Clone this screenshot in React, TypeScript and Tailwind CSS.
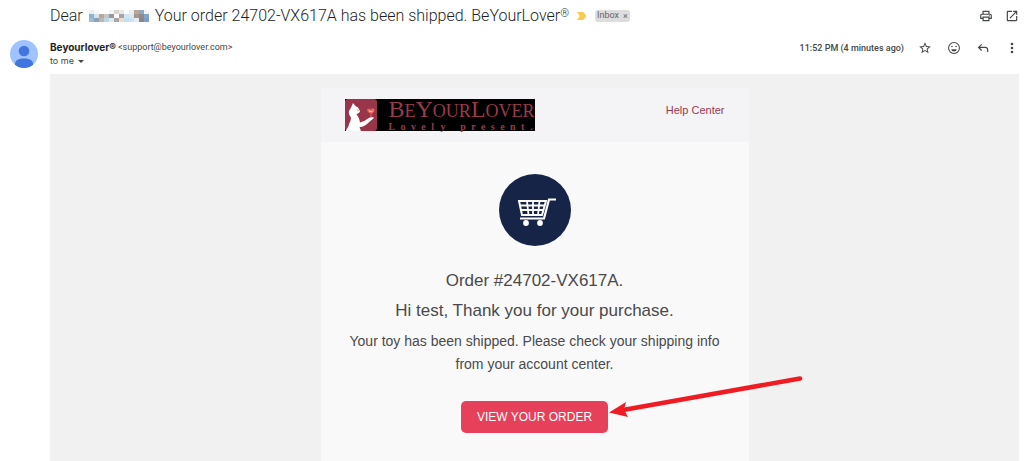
import type { ReactNode } from "react";

const MOSAIC = [
  "#eeeeee", "#f7f7f7", "#ffffff", "#ffffff", "#f5f5f5", "#d9d4d2", "#e8e8e8", "#ffffff", "#e6eef2", "#b9a59c", "#8fa9c0", "#f4f4f4",
  "#8fb0cf", "#d9e2e8", "#b9a79f", "#c6c9cc", "#9b979c", "#fafafa", "#a9a3a6", "#cfe6f2", "#dfe6ea", "#a39890", "#8d8a90", "#7fa6c9",
  "#9bbcd6", "#8da3b5", "#c5b4ab", "#b8d8e8", "#dfe9ee", "#aaa5a8", "#f1d9c8", "#bfe0f0", "#cfe3ee", "#e9edf0", "#8b878c", "#7f9fc0",
];

function IconButton({ label, children }: { label: string; children: ReactNode }) {
  return (
    <button type="button" aria-label={label} className="flex size-4 items-center justify-center text-[#444746]">
      {children}
    </button>
  );
}

function Avatar() {
  return (
    <svg viewBox="0 0 28 28" className="size-7">
      <clipPath id="avatar"><circle cx="14" cy="14" r="14" /></clipPath>
      <g clipPath="url(#avatar)">
        <rect width="28" height="28" fill="#a0c3ff" />
        <circle cx="14" cy="11" r="5.300" fill="#4175df" />
        <path d="M5 24c0-4 4-5.500 9-5.500s9 1.500 9 5.500v1.500a14 14 0 0 1-18 0z" fill="#4175df" />
      </g>
    </svg>
  );
}

function Subject() {
  return (
    <div className="flex items-center">
      <h1 className="flex items-center font-[Roboto,sans-serif] text-base leading-6 font-light text-[#1f1f1f]">
        Dear
        <span className="mx-1.5 grid h-3 w-15 grid-cols-12">
          {MOSAIC.map((c, i) => <span key={i} style={{ backgroundColor: c }} />)}
        </span>
        Your order 24702-VX617A has been shipped. BeYourLover
        <span className="self-start text-[11px] leading-5">®</span>
      </h1>
      <svg viewBox="0 0 10 8" className="ml-2 h-2 w-2.5">
        <path d="M0 0h6.200L9.500 4 6.200 8H0l2.600-4z" fill="#f7cb4d" />
      </svg>
      <span className="ml-2 flex h-3 items-center gap-1 rounded-[3px] bg-[#dddddd] px-0.5 font-[Roboto,sans-serif] text-[9px] text-[#666666]">
        Inbox
        <button type="button" aria-label="Remove label Inbox" className="leading-3">×</button>
      </span>
      <div className="ml-auto flex gap-2.5">
        <IconButton label="Print all">
          <svg viewBox="0 0 24 24" className="size-3.5" fill="currentColor">
            <path d="M19 8h-1V3H6v5H5c-1.660 0-3 1.340-3 3v6h4v4h12v-4h4v-6c0-1.660-1.340-3-3-3zM8 5h8v3H8V5zm8 14H8v-4h8v4zm2-4v-2H6v2H4v-4c0-.55.45-1 1-1h14c.55 0 1 .45 1 1v4h-2z" />
            <circle cx="18" cy="11.500" r="1" />
          </svg>
        </IconButton>
        <IconButton label="In new window">
          <svg viewBox="0 0 24 24" className="size-3.5" fill="currentColor">
            <path d="M19 19H5V5h7V3H5a2 2 0 0 0-2 2v14a2 2 0 0 0 2 2h14c1.100 0 2-.9 2-2v-7h-2v7zM14 3v2h3.590l-9.830 9.830 1.410 1.410L19 6.410V10h2V3h-7z" />
          </svg>
        </IconButton>
      </div>
    </div>
  );
}

function Sender() {
  return (
    <div className="flex items-start">
      <div className="text-[9px] leading-3.5 text-[#444746]">
        <p className="flex items-center gap-0.5 font-[Roboto,sans-serif]">
          <span className="font-[Inter,sans-serif] text-[10px] font-bold text-[#1f1f1f]">Beyourlover®</span>
          &lt;support@beyourlover.com&gt;
        </p>
        <p className="flex items-center gap-1">
          to me
          <svg viewBox="0 0 6 3" className="h-[3px] w-1.5"><path d="M0 0h6L3 3z" fill="#444746" /></svg>
        </p>
      </div>
      <div className="ml-auto flex items-center gap-[13px]">
        <span className="font-[Roboto,sans-serif] text-[9px] leading-3.5 font-medium text-[#444746]">11:52 PM (4 minutes ago)</span>
        <IconButton label="Star">
          <svg viewBox="0 0 24 24" className="size-3.5" fill="currentColor">
            <path d="M22 9.240l-7.190-.62L12 2 9.190 8.630 2 9.240l5.460 4.730L5.820 21 12 17.270 18.180 21l-1.630-7.030L22 9.240zM12 15.400l-3.760 2.270 1-4.280-3.320-2.880 4.380-.38L12 6.100l1.710 4.040 4.380.38-3.320 2.880 1 4.280L12 15.400z" />
          </svg>
        </IconButton>
        <IconButton label="Add reaction">
          <svg viewBox="0 0 24 24" className="size-3.5" fill="currentColor">
            <circle cx="12" cy="12" r="9.300" fill="none" stroke="currentColor" strokeWidth="1.800" />
            <circle cx="8.500" cy="9.500" r="1.400" />
            <circle cx="15.500" cy="9.500" r="1.400" />
            <path d="M7.500 14h9a4.500 3.800 0 0 1-9 0z" />
          </svg>
        </IconButton>
        <IconButton label="Reply">
          <svg viewBox="0 0 24 24" className="size-3.5" fill="currentColor">
            <path d="M19 19v-4a3 3 0 0 0-3-3H6.830l3.580 3.590L9 17l-6-6 6-6 1.410 1.410L6.830 10H16c2.760 0 5 2.240 5 5v4h-2z" />
          </svg>
        </IconButton>
        <IconButton label="More">
          <svg viewBox="0 0 24 24" className="size-3.5" fill="currentColor">
            <circle cx="12" cy="5" r="2.200" />
            <circle cx="12" cy="12" r="2.200" />
            <circle cx="12" cy="19" r="2.200" />
          </svg>
        </IconButton>
      </div>
    </div>
  );
}

function Logo() {
  return (
    <div className="flex h-8 w-[190px] bg-black text-[#993a4d]">
      <svg viewBox="0 0 32 32" className="size-8 shrink-0">
        <rect width="32" height="32" rx="3" fill="#993549" />
        <path d="M6 8.500L8 4l2.500 3L13 8.500l2 3.500c-.3 1.700-1.500 2.500-3.500 3 1 2 3 4 3.500 8.500 3-.8 5.500-2 8-4 2-1.200 4-1.500 6-.7-1.500 1.800-3.500 3-5 4.500-3 3-6 4.500-9.500 5L16 32H1c0-2 2-3 2.500-5 .5-3 2.500-5 2.500-8.500C4 16 3.500 14 4 12z" fill="#fff" />
        <path d="M12 11l1.500.5" stroke="#c9a25a" />
        <path d="M22 10.500c1-1.200 3-1 3.800.3.800-1.500 2.700-1.700 3.700-.6.500 2-1.200 3.500-3.500 4.800-2-1-3.800-2.500-4-4.500z" fill="#f0685a" />
        <path d="M26 15v3" stroke="#f0685a" />
        <path d="M24 12l3.500.8" stroke="#ffd9b8" />
      </svg>
      <div className="ml-3 flex-1 font-['Liberation_Serif',serif]">
        <p className="text-lg leading-5 whitespace-nowrap">
          <span className="text-2xl leading-5">B</span>E<span className="text-2xl leading-5">Y</span>OUR<span className="text-2xl leading-5">L</span>OVER
        </p>
        <p className="flex justify-between text-[10px] leading-3 font-bold">
          {[..."Lovely present."].map((ch, i) => <span key={i} className="min-w-1">{ch}</span>)}
        </p>
      </div>
    </div>
  );
}

function CartBadge() {
  return (
    <svg viewBox="0 0 72 72" className="mx-auto size-[72px]">
      <circle cx="36" cy="36" r="36" fill="#162447" />
      <g fill="none" stroke="#fff">
        <path d="M20 27h27l-4 14H23z" strokeWidth="2" />
        <path d="M21 31.500h25M22 36h23M28 27l1.500 14M34 27v14M40.500 27L39 41" strokeWidth="1.800" />
        <path d="M57 25.500h-7L45 44.500H21" strokeWidth="2.200" />
      </g>
      <circle cx="27" cy="49" r="2.900" fill="#fff" />
      <circle cx="41" cy="49" r="2.900" fill="#fff" />
    </svg>
  );
}

function OrderEmail() {
  return (
    <section className="mx-auto w-full max-w-[428px] bg-[#f9f9f9] font-['Liberation_Sans',sans-serif] text-[#4a4a4a]">
      <header className="flex items-start justify-between bg-[#f4f4f7] px-6 py-[11px]">
        <Logo />
        <a href="#help" className="pt-1 text-[11px] leading-3.5 text-[#993a4d]">Help Center</a>
      </header>
      <div className="px-4 pt-8 pb-4 text-center">
        <CartBadge />
        <h2 className="mt-5 text-[17px] leading-[30px]">Order #24702-VX617A.</h2>
        <h2 className="text-[17px] leading-[30px]">Hi test, Thank you for your purchase.</h2>
        <p className="mx-auto mt-1 max-w-[390px] text-sm leading-[23px]">
          Your toy has been shipped. Please check your shipping info from your account center.
        </p>
        <div className="relative mt-[25px] inline-block">
          <a href="#order" className="block rounded-[5px] bg-[#e7405b] px-4 py-1 text-xs leading-6 text-white">
            VIEW YOUR ORDER
          </a>
          <svg viewBox="0 0 200 50" className="absolute -top-7 left-full h-[50px] w-[200px]">
            <path d="M192 5.500L15 37" stroke="#ef1c24" strokeWidth="4.500" strokeLinecap="round" />
            <path d="M1 39.500l17-10.500-2 7.500 4 7.500z" fill="#ef1c24" />
          </svg>
        </div>
      </div>
    </section>
  );
}

export default function App() {
  return (
    <main className="flex min-h-screen bg-white font-[Inter,sans-serif]">
      <aside className="flex w-[50px] shrink-0 items-start pt-10 pl-[10px]">
        <Avatar />
      </aside>
      <div className="flex min-w-0 flex-1 flex-col">
        <div className="pt-1 pr-1"><Subject /></div>
        <div className="pt-3 pr-1 pb-1.5"><Sender /></div>
        <div className="mr-[5px] flex flex-1 bg-[#f1f1f1] pt-3.5">
          <OrderEmail />
        </div>
      </div>
    </main>
  );
}
